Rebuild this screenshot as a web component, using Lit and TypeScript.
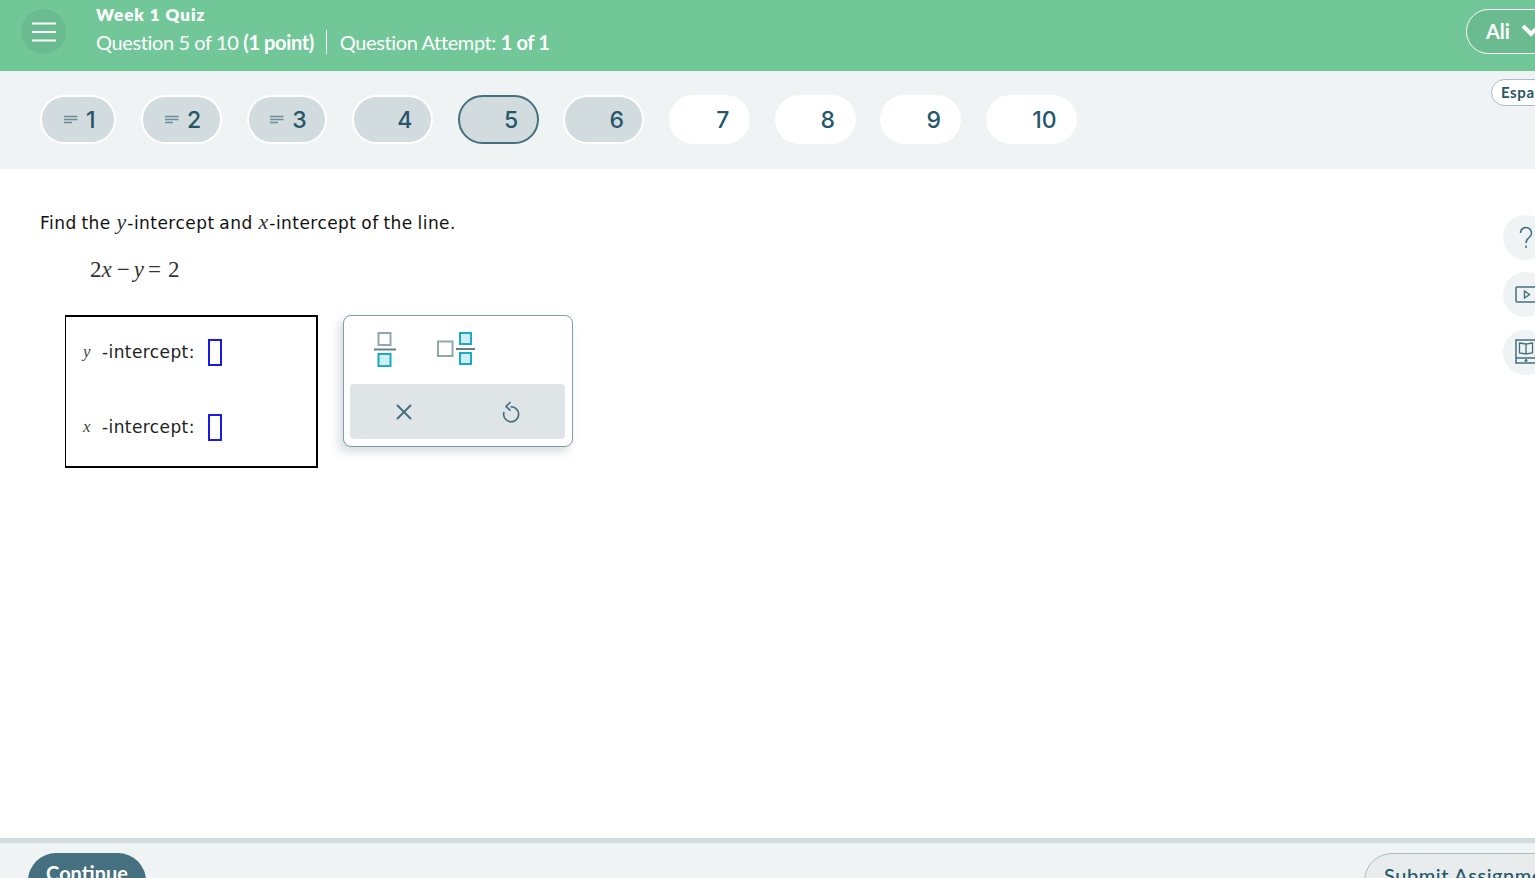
import { LitElement, html, css, svg } from "lit";
import { customElement } from "lit/decorators.js";

const nums = [
  { n: 1, w: 76, note: true, st: "done" },
  { n: 2, w: 81, note: true, st: "done" },
  { n: 3, w: 80.5, note: true, st: "done" },
  { n: 4, w: 81, note: false, st: "done" },
  { n: 5, w: 81, note: false, st: "cur" },
  { n: 6, w: 81, note: false, st: "done" },
  { n: 7, w: 80.5, note: false, st: "open" },
  { n: 8, w: 81, note: false, st: "open" },
  { n: 9, w: 81, note: false, st: "open" },
  { n: 10, w: 91, note: false, st: "open" },
];

const noteIcon = svg`<svg class="note" width="14" height="10" viewBox="0 0 14 10"><path d="M0 1.500h13.500M0 4.500h13.500M0 7.500h8" stroke="#6a8d98" stroke-width="1.300" fill="none"/></svg>`;

@customElement("app-root")
export class AppRoot extends LitElement {
  static styles = css`
    :host { display: flex; flex-direction: column; height: 878px; width: 1535px; overflow: hidden; position: relative; background: #fff; font-family: "Lato", "Open Sans", sans-serif; }
    .top { height: 71px; flex: none; background: #72c799; display: flex; align-items: flex-start; color: #fff; }
    .burger { width: 45px; height: 45px; border-radius: 50%; background: #6bbb90; margin: 9px 0 0 21px; display: flex; align-items: center; justify-content: center; flex: none; }
    .titles { margin-left: 30px; flex: 1; }
    .quiz { font-weight: 800; font-size: 17px; line-height: 20px; margin-top: 5px; letter-spacing: 1px; }
    .sub { display: flex; align-items: center; font-size: 20px; line-height: 24px; margin-top: 5px; letter-spacing: -.38px; }
    .sub b { font-weight: 700; }
    .sep { width: 1px; height: 24px; background: #fff; margin: 0 13px 0 12px; }
    .user { margin: 9px -34px 0 0; width: 103px; height: 45px; box-sizing: border-box; border: 1px solid #fff; border-radius: 23px; background: #6bbb90; display: flex; align-items: center; padding: 0 0 2px 19px; font-size: 20px; font-weight: 700; gap: 11px; flex: none; }
    .nav { height: 98px; flex: none; background: #eff3f4; display: flex; align-items: flex-start; justify-content: space-between; }
    .pills { display: flex; gap: 24.8px; padding: 24px 0 0 40px; }
    .pill { height: 49px; box-sizing: border-box; border-radius: 25px; border: 2px solid #fff; display: flex; align-items: center; justify-content: flex-end; font-family: "Inter", sans-serif; font-weight: 500; font-size: 23px; color: #26566a; gap: 8px; padding-right: 18.5px; }
    .pill.done { background: #d2dbdd; }
    .pill.cur { background: #d2dbdd; border-color: #44707f; }
    .pill.open { background: #fff; }
    .espa { margin: 8px -20px 0 0; width: 64px; height: 27px; box-sizing: border-box; border: 1px solid #a9bcc4; border-radius: 14px; background: #fff; color: #26566a; font-weight: 700; font-size: 15px; line-height: 25px; padding-left: 9px; letter-spacing: .6px; flex: none; overflow: hidden; white-space: nowrap; }
    main { flex: 1; min-height: 0; padding: 41px 0 0 40px; font-family: "DejaVu Sans", Verdana, sans-serif; color: #111; }
    .q { font-size: 17px; line-height: 24px; letter-spacing: .45px; word-spacing: -1px; }
    i.m { font-family: "Liberation Serif", serif; font-style: italic; font-size: 22px; color: #333; letter-spacing: 0; margin: 0 1px; }
    .eq { font-family: "Liberation Serif", serif; font-size: 23px; line-height: 28px; margin: 21px 0 0 50px; color: #333; display: flex; }
    .eq i { font-style: italic; }
    .eq .op { margin: 0 4px 0 5px; }
    .eq .eqs { margin: 0 7px 0 4px; }
    .work { display: flex; align-items: flex-start; gap: 25px; margin: 31px 0 0 25px; }
    .ansbox { width: 253px; height: 153px; box-sizing: border-box; border: 2px solid #000; border-width: 2px 2px 2px 1px; display: flex; flex-direction: column; padding: 19px 0 0 17px; gap: 43px; }
    .row { display: flex; align-items: center; height: 32px; font-size: 17px; letter-spacing: .4px; color: #222; }
    .row i { font-family: "Liberation Serif", serif; font-style: italic; font-size: 17px; width: 19px; color: #444; }
    .input { width: 10px; height: 23px; border: 2px solid #1a1ae6; margin-left: 13px; box-sizing: content-box; }
    .pad { width: 230px; height: 132px; box-sizing: border-box; border: 1px solid #7f9ea8; border-radius: 8px; background: #fff; box-shadow: -4px 5px 10px rgba(90,120,130,.25); padding: 6px 7px 6px 6px; display: flex; flex-direction: column; }
    .tools { height: 62px; box-sizing: border-box; flex: none; display: flex; align-items: flex-start; gap: 40px; padding: 10px 0 0 23px; }
    .acts { height: 55px; flex: none; background: #dfe5e7; border-radius: 4px; display: flex; align-items: center; padding-left: 44px; gap: 87px; }
    .side { position: absolute; left: 1503px; top: 215px; display: flex; flex-direction: column; gap: 12.4px; }
    .round { width: 45px; height: 45px; border-radius: 50%; background: #eff3f4; color: #44707f; display: flex; align-items: center; padding-left: 12px; box-sizing: border-box; }
    footer { height: 40px; flex: none; border-top: 5px solid #d2dbdd; box-sizing: border-box; background: #eff3f4; display: flex; justify-content: space-between; padding: 10px 0 0 28px; overflow: hidden; }
    .btn { height: 60px; border-radius: 28px; box-sizing: border-box; font-size: 20px; flex: none; }
    .cont { width: 118px; background: #44707f; color: #fff; text-align: center; line-height: 40px; font-weight: 700; }
    .submit { width: 200px; margin-right: -29px; border: 1px solid #a9bcc4; background: #e8eced; color: #26566a; padding: 9px 0 0 19px; white-space: nowrap; overflow: hidden; line-height: 24px; font-weight: 500; letter-spacing: .55px; }
  `;

  render() {
    return html`
      <div class="top">
        <div class="burger">
          <svg width="26" height="20" viewBox="0 0 26 20"><path d="M1 1.500h24M1 10h24M1 18.500h24" stroke="#fff" stroke-width="2" fill="none"/></svg>
        </div>
        <div class="titles">
          <div class="quiz">Week 1 Quiz</div>
          <div class="sub">
            <span>Question 5 of 10 <b>(1 point)</b></span>
            <span class="sep"></span>
            <span>Question Attempt: <b>1 of 1</b></span>
          </div>
        </div>
        <div class="user">
          <span>Ali</span>
          <svg width="20" height="14" viewBox="0 0 20 14"><path d="M2 2l8 8 8-8" stroke="#fff" stroke-width="4" fill="none"/></svg>
        </div>
      </div>
      <div class="nav">
        <div class="pills">
          ${nums.map(
            (p) => html`<div class="pill ${p.st}" style="width:${p.w}px">${p.note ? noteIcon : ""}<span>${p.n}</span></div>`
          )}
        </div>
        <div class="espa">Español</div>
      </div>
      <main>
        <div class="q">Find the <i class="m">y</i>-intercept and <i class="m">x</i>-intercept of the line.</div>
        <div class="eq">2<i>x</i><span class="op">−</span><i>y</i><span class="eqs">=</span>2</div>
        <div class="work">
          <div class="ansbox">
            <div class="row"><i>y</i>-intercept:<div class="input"></div></div>
            <div class="row"><i>x</i>-intercept:<div class="input"></div></div>
          </div>
          <div class="pad">
            <div class="tools">
              <svg width="24" height="36" viewBox="0 0 24 36">
                <rect x="5.500" y="1" width="12" height="12" fill="#fff" stroke="#8fa8b0" stroke-width="2"/>
                <path d="M1 17.500h22" stroke="#5f808c" stroke-width="2"/>
                <rect x="5.500" y="22" width="12" height="12" fill="#cdeef2" stroke="#1ba9c4" stroke-width="2"/>
              </svg>
              <svg width="39" height="36" viewBox="0 0 39 36">
                <rect x="1" y="9.500" width="14.500" height="14.500" fill="#fff" stroke="#8fa8b0" stroke-width="2"/>
                <path d="M19 17h19" stroke="#5f808c" stroke-width="2"/>
                <rect x="23" y="1" width="11" height="11" fill="#cdeef2" stroke="#1ba9c4" stroke-width="2"/>
                <rect x="23" y="21" width="11" height="11" fill="#cdeef2" stroke="#1ba9c4" stroke-width="2"/>
              </svg>
            </div>
            <div class="acts">
              <svg width="20" height="20" viewBox="0 0 20 20"><path d="M3 3l14 14M17 3L3 17" stroke="#44707f" stroke-width="2" fill="none"/></svg>
              <svg width="20" height="24" viewBox="0 0 20 24"><path d="M9.500 6.800A7.500 7.500 0 1 1 3 12M9.500 2L5 6.500l4.500 4" stroke="#44707f" stroke-width="1.700" fill="none"/></svg>
            </div>
          </div>
        </div>
      </main>
      <div class="side">
        <div class="round"><svg width="18" height="24" viewBox="0 0 18 24"><path d="M5.500 7a5.500 5.500 0 1 1 8.500 4.600C11.500 13.300 11 14 11 17M11 19.500v2.500" stroke="#44707f" stroke-width="1.500" fill="none"/></svg></div>
        <div class="round"><svg width="24" height="18" viewBox="0 0 24 18"><rect x="1" y="1" width="22" height="15" rx="1" fill="none" stroke="#44707f" stroke-width="1.500"/><path d="M9.500 5v7l5-3.500z" fill="none" stroke="#44707f" stroke-width="1.400"/></svg></div>
        <div class="round"><svg width="24" height="26" viewBox="0 0 24 26"><rect x="1" y="1" width="22" height="23" fill="none" stroke="#44707f" stroke-width="1.500"/><path d="M1 19h22M4.500 4l6.500 1v10l-6.500-1zM17.500 4L11 5v10l6.500-1z" fill="none" stroke="#44707f" stroke-width="1.300"/><circle cx="11" cy="21.500" r="1.500" fill="#44707f"/></svg></div>
      </div>
      <footer>
        <div class="btn cont">Continue</div>
        <div class="btn submit">Submit Assignment</div>
      </footer>
    `;
  }
}
